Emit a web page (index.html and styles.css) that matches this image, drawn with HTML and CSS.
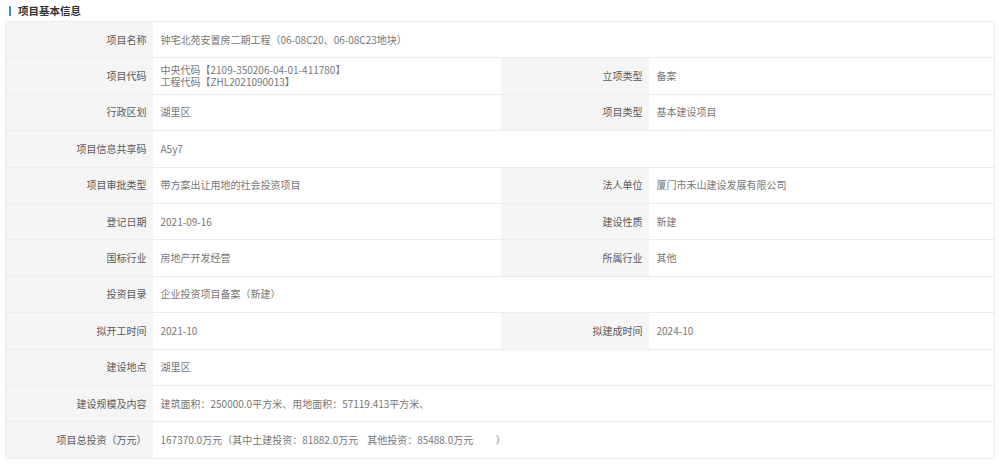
FILE: index.html
```html
<!DOCTYPE html>
<html>
	<head>
		<meta charset="utf-8">
		<title>项目基本信息</title>
		<link rel="stylesheet" href="styles.css">
	</head>
	<body>
		<div class="panel-title"><span class="bar"></span>项目基本信息</div>
		<table class="info">
			<colgroup>
				<col class="c-label"><col class="c-value"><col class="c-label2"><col>
			</colgroup>
			<tr>
				<td class="label">项目名称</td>
				<td class="value" colspan="3">钟宅北苑安置房二期工程（06-08C20、06-08C23地块）</td>
			</tr>
			<tr>
				<td class="label">项目代码</td>
				<td class="value two">中央代码【2109-350206-04-01-411780】<br>工程代码【ZHL2021090013】</td>
				<td class="label">立项类型</td>
				<td class="value">备案</td>
			</tr>
			<tr>
				<td class="label">行政区划</td>
				<td class="value">湖里区</td>
				<td class="label">项目类型</td>
				<td class="value">基本建设项目</td>
			</tr>
			<tr>
				<td class="label">项目信息共享码</td>
				<td class="value" colspan="3">A5y7</td>
			</tr>
			<tr>
				<td class="label">项目审批类型</td>
				<td class="value">带方案出让用地的社会投资项目</td>
				<td class="label">法人单位</td>
				<td class="value">厦门市禾山建设发展有限公司</td>
			</tr>
			<tr>
				<td class="label">登记日期</td>
				<td class="value">2021-09-16</td>
				<td class="label">建设性质</td>
				<td class="value">新建</td>
			</tr>
			<tr>
				<td class="label">国标行业</td>
				<td class="value">房地产开发经营</td>
				<td class="label">所属行业</td>
				<td class="value">其他</td>
			</tr>
			<tr>
				<td class="label">投资目录</td>
				<td class="value" colspan="3">企业投资项目备案（新建）</td>
			</tr>
			<tr>
				<td class="label">拟开工时间</td>
				<td class="value">2021-10</td>
				<td class="label">拟建成时间</td>
				<td class="value">2024-10</td>
			</tr>
			<tr>
				<td class="label">建设地点</td>
				<td class="value" colspan="3">湖里区</td>
			</tr>
			<tr>
				<td class="label">建设规模及内容</td>
				<td class="value" colspan="3">建筑面积：250000.0平方米、用地面积：57119.413平方米、</td>
			</tr>
			<tr>
				<td class="label">项目总投资（万元）</td>
				<td class="value" colspan="3">167370.0万元（其中土建投资：81882.0万元&nbsp;&nbsp;&nbsp;&nbsp;其他投资：85488.0万元&nbsp;&nbsp;&nbsp;&nbsp;&nbsp;&nbsp;&nbsp;&nbsp;&nbsp;&nbsp;）</td>
			</tr>
		</table>
	</body>
</html>
```

FILE: styles.css
```css
body {
    margin: 0;
    background: #fff;
    font-family: "Noto Sans CJK SC", "Noto Sans", sans-serif;
    font-size: 10px;
    color: #666;
}
.panel-title {
    display: flex;
    align-items: center;
    height: 21px;
    padding-left: 9px;
    font-size: 10.5px;
    font-weight: bold;
    color: #333;
}
.panel-title .bar {
    width: 2px;
    height: 10px;
    background: #3b8fd8;
    margin-right: 7px;
}
.info {
    margin-left: 5px;
    width: 990px;
    border-collapse: collapse;
    table-layout: fixed;
    border: 1px solid #ececec;
    font-size: 10px;
}
.c-label { width: 147px; }
.c-value { width: 348px; }
.c-label2 { width: 148px; }
.info td {
    height: 35.4px;
    padding: 0;
    border-bottom: 1px solid #ececec;
    line-height: 12px;
    white-space: nowrap;
}
.info td.label {
    background: #f5f5f5;
    text-align: right;
    padding-right: 6px;
    color: #5a5a5a;
}
.info td.value {
    background: #fff;
    padding-left: 8px;
    color: #777;
}
```
